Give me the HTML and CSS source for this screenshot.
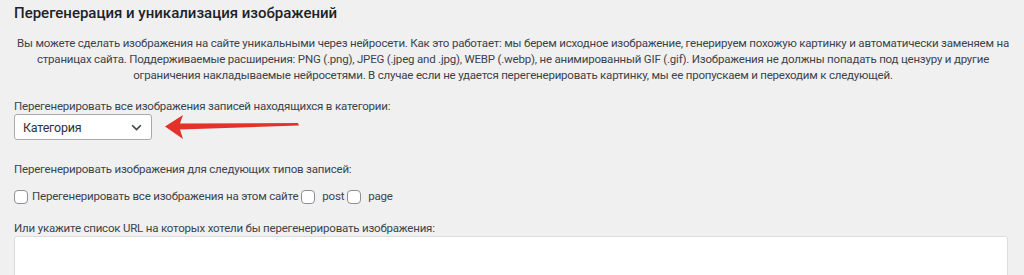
FILE: index.html
```html
<!DOCTYPE html>
<html lang="ru">
<head>
<meta charset="utf-8">
<link rel="stylesheet" href="styles.css">
</head>
<body>
<div class="wrap">
  <h2 class="title">Перегенерация и уникализация изображений</h2>
  <p class="intro">Вы можете сделать изображения на сайте уникальными через нейросети. Как это работает: мы берем исходное изображение, генерируем похожую картинку и автоматически заменяем на<br>страницах сайта. Поддерживаемые расширения: PNG (.png), JPEG (.jpeg and .jpg), WEBP (.webp), не анимированный GIF (.gif). Изображения не должны попадать под цензуру и другие<br>ограничения накладываемые нейросетями. В случае если не удается перегенерировать картинку, мы ее пропускаем и переходим к следующей.</p>

  <div class="field first">
    <div class="label">Перегенерировать все изображения записей находящихся в категории:</div>
    <div class="select-row">
      <div class="select">
        <span>Категория</span>
        <svg class="chev" width="11" height="7" viewBox="0 0 11 7"><path d="M1.2 1.2 L5.5 5.5 L9.8 1.2" fill="none" stroke="#3c434a" stroke-width="1.6"/></svg>
      </div>
      <svg class="arrow" width="140" height="26" viewBox="0 0 140 26"><path d="M0 12.5 L18 1 L15 9.5 L133 9 L134 11.5 L15 15.5 L18 25 Z" fill="#e2332b"/></svg>
    </div>
  </div>

  <div class="field types">
    <div class="label">Перегенерировать изображения для следующих типов записей:</div>
    <div class="checks">
      <label class="check"><span class="box"></span>Перегенерировать все изображения на этом сайте</label>
      <label class="check"><span class="box"></span>post</label>
      <label class="check"><span class="box"></span>page</label>
    </div>
  </div>

  <div class="field urls">
    <div class="label">Или укажите список URL на которых хотели бы перегенерировать изображения:</div>
    <div class="textarea"></div>
  </div>
</div>
</body>
</html>
```

FILE: styles.css
```css
html, body {
  margin: 0;
  padding: 0;
  background: #f0f0f1;
  height: 275px;
  overflow: hidden;
}
body {
  font-family: Roboto, "Liberation Sans", sans-serif;
  color: #3c434a;
  font-size: 11.5px;
  letter-spacing: -0.2px;
}
.wrap {
  padding: 0 16px 0 14px;
}
.title {
  margin: 0;
  padding-top: 3px;
  font-size: 15px;
  font-weight: 500;
  color: #1d2327;
  line-height: 20px;
  letter-spacing: 0;
}
.intro {
  margin: 12px -14px 0 -10px;
  text-align: center;
  line-height: 16px;
  white-space: nowrap;
}
.label {
  line-height: 15px;
}
.first {
  margin-top: 16px;
}
.select-row {
  display: flex;
  align-items: center;
}
.select {
  width: 138px;
  height: 26px;
  box-sizing: border-box;
  background: #fff;
  border: 1px solid #a7aaad;
  border-radius: 3px;
  display: flex;
  align-items: center;
  justify-content: space-between;
  padding: 0 9px 0 8px;
  font-size: 12.5px;
  color: #2c3338;
}
.arrow {
  margin-left: 13px;
}
.types {
  margin-top: 22px;
}
.checks {
  display: flex;
  align-items: center;
  height: 15px;
  margin-top: 12px;
  gap: 3px;
  line-height: 15px;
}
.check {
  display: flex;
  align-items: center;
}
.box {
  width: 14px;
  height: 14px;
  box-sizing: border-box;
  border: 1px solid #8c8f94;
  border-radius: 4px;
  background: #fff;
  margin-right: 4px;
}
.check + .check .box { margin-right: 7px; }
.urls {
  margin-top: 17px;
}
.textarea {
  height: 60px;
  background: #fff;
  border: 1px solid #dcdcde;
  border-radius: 3px;
}
```
